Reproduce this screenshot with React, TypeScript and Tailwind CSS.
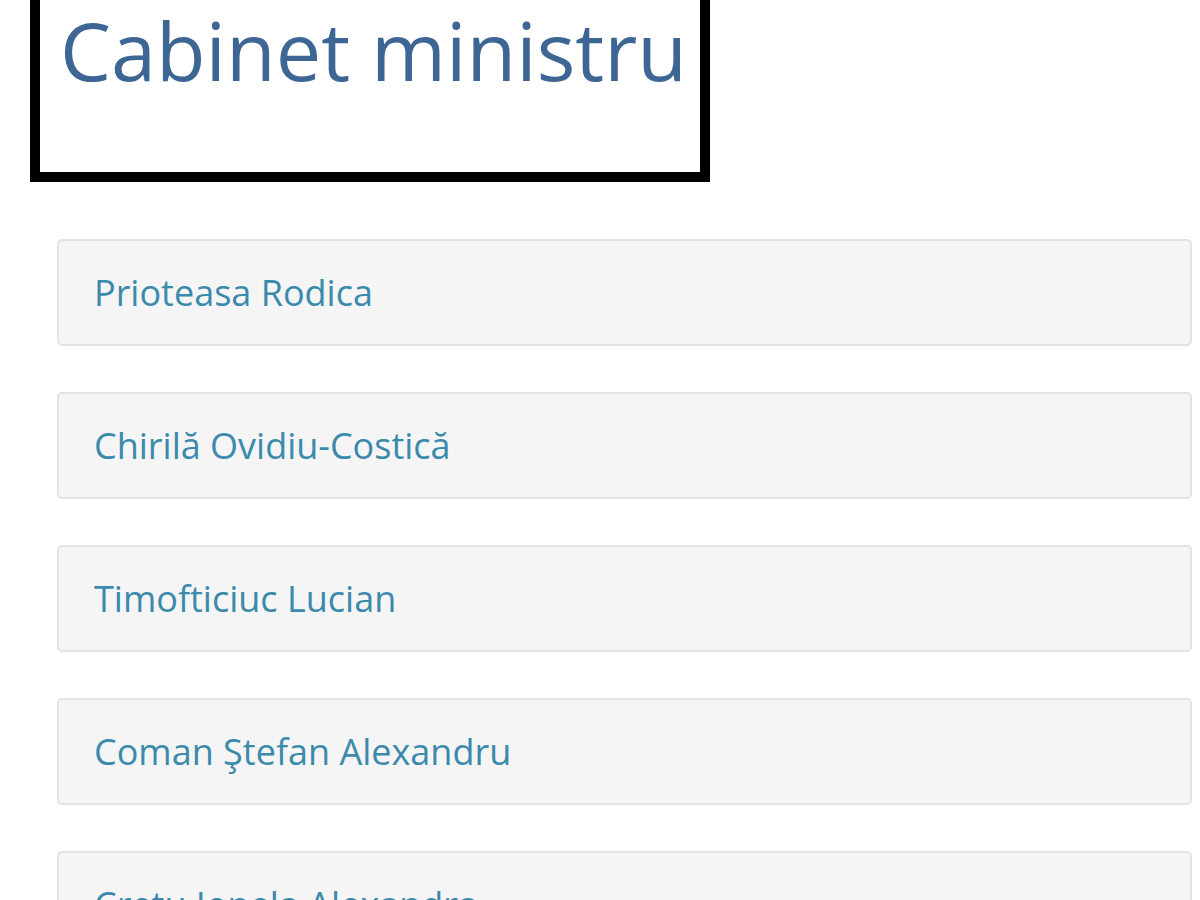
import React from "react";

const names = [
  "Prioteasa Rodica",
  "Chirilă Ovidiu-Costică",
  "Timofticiuc Lucian",
  "Coman Ştefan Alexandru",
  "Crețu Ionela Alexandra",
];

export default function App() {
  return (
    <div
      className="h-[900px] w-[1200px] overflow-hidden bg-white"
      style={{ fontFamily: '"Open Sans", "Noto Sans", sans-serif' }}
    >
      <div className="ml-[30px] h-[182px] w-[680px] border-[10px] border-t-0 border-black pl-[20px] pt-[9px]">
        <h1 className="text-[81px] font-normal leading-none text-[#3d6695]">Cabinet ministru</h1>
      </div>
      <div className="ml-[57px] mr-[8px] mt-[57px] flex flex-col gap-[46px]">
        {names.map((n) => (
          <div
            key={n}
            className="flex h-[107px] shrink-0 items-center rounded-[5px] border-2 border-[#e3e3e3] bg-[#f5f5f5] pl-[35px]"
          >
            <span className="text-[36px] leading-none text-[#3b8aac]">{n}</span>
          </div>
        ))}
      </div>
    </div>
  );
}
